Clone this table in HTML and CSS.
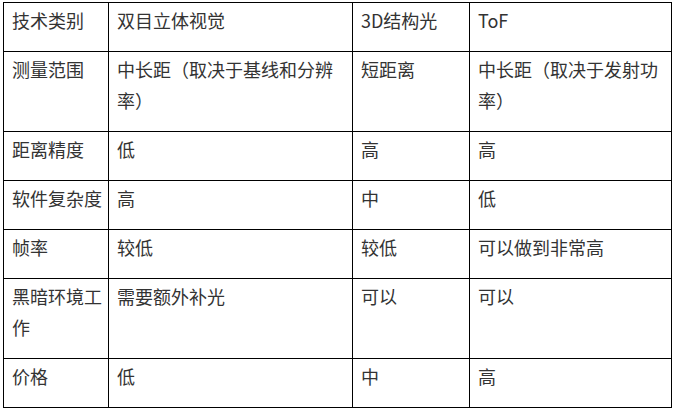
FILE: index.html
```html
<!DOCTYPE html>
<html lang="zh-CN">
<head>
<meta charset="utf-8">
<link rel="stylesheet" href="styles.css">
</head>
<body>
<table class="cmp">
  <colgroup>
    <col class="c1"><col class="c2"><col class="c3"><col class="c4">
  </colgroup>
  <tbody>
    <tr><td>技术类别</td><td>双目立体视觉</td><td>3D结构光</td><td>ToF</td></tr>
    <tr><td>测量范围</td><td>中长距（取决于基线和分辨率）</td><td>短距离</td><td>中长距（取决于发射功率）</td></tr>
    <tr><td>距离精度</td><td>低</td><td>高</td><td>高</td></tr>
    <tr><td>软件复杂度</td><td>高</td><td>中</td><td>低</td></tr>
    <tr><td>帧率</td><td>较低</td><td>较低</td><td>可以做到非常高</td></tr>
    <tr><td>黑暗环境工作</td><td>需要额外补光</td><td>可以</td><td>可以</td></tr>
    <tr><td>价格</td><td>低</td><td>中</td><td>高</td></tr>
  </tbody>
</table>
</body>
</html>
```
FILE: styles.css
```css
html, body {
  margin: 0;
  padding: 0;
  background: #ffffff;
}
body {
  padding: 2px 0 0 3px;
}
.cmp {
  border-collapse: collapse;
  table-layout: fixed;
  width: 668px;
  font-family: "Noto Sans CJK SC", "Noto Sans", sans-serif;
  font-size: 18px;
  color: #333333;
}
.c1 { width: 105px; }
.c2 { width: 244px; }
.c3 { width: 117px; }
.c4 { width: 202px; }
.cmp td {
  border: 1px solid #000000;
  padding: 2px 3px 15px 8px;
  line-height: 31px;
  vertical-align: top;
  text-align: left;
  word-break: break-all;
}
```
